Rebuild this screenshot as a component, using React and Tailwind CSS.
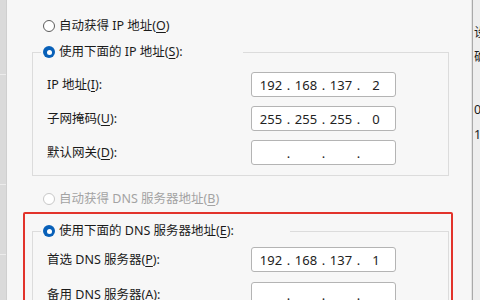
import React from "react";

const font = { fontFamily: '"Noto Sans", "Noto Sans CJK SC", sans-serif' };

const Key = ({ k }) => (
  <>
    (<span className="underline underline-offset-2">{k}</span>)
  </>
);

const Radio = ({ checked, disabled }) => {
  if (checked) {
    return (
      <span className="flex h-[12px] w-[12px] shrink-0 items-center justify-center rounded-full bg-[#0860b8]">
        <span className="h-[5px] w-[5px] rounded-full bg-white" />
      </span>
    );
  }
  return (
    <span
      className={`h-[12px] w-[12px] shrink-0 rounded-full border bg-white ${
        disabled ? "border-[#c8c8c8] bg-[#f6f6f6]" : "border-[#5c5c5c]"
      }`}
    />
  );
};

const IpBox = ({ parts }) => (
  <div className="flex h-[25px] w-[145px] items-center rounded-[3px] border border-[#b4b4b4] bg-white pl-[5px] text-[13px] text-[#222]">
    {parts.map((p, i) => (
      <React.Fragment key={i}>
        <span className="w-[28px] text-center">{p}</span>
        {i < 3 && <span className="w-[7px] text-center">.</span>}
      </React.Fragment>
    ))}
  </div>
);

const Row = ({ label, parts, className = "" }) => (
  <div className={`flex items-center ${className}`}>
    <span className="w-[204px]">{label}</span>
    <IpBox parts={parts} />
  </div>
);

const empty = ["", "", "", ""];

export default function App() {
  return (
    <div
      className="relative flex h-[300px] w-[480px] overflow-hidden bg-[#f6f6f6] text-[12.5px] leading-[18px] text-[#1b1b1b]"
      style={font}
    >
      {/* left window edge */}
      <div className="flex w-[7px] shrink-0 flex-col border-r border-[#cfcfcf] bg-[#dadada]">
        <div className="h-[75px] border-b border-[#ececec]" />
        <div className="h-[110px] border-b border-[#ececec]" />
        <div className="h-[70px] border-b border-[#ececec]" />
      </div>

      {/* dialog */}
      <div className="w-[465px] shrink-0 border-r border-[#e4e4e4] bg-[#f7f7f7] pt-[17px]">
        <div className="flex h-[18px] items-center gap-[4px] pl-[36px]">
          <Radio />
          <span>
            自动获得 IP 地址<Key k="O" />
          </span>
        </div>

        <fieldset className="ml-[25px] mt-[8px] w-[417px] border border-[#dcdcdc] pb-[10px]">
          <legend className="ml-[8px] flex h-[18px] w-[202px] items-center gap-[4px] pl-[2px]">
            <Radio checked />
            <span>
              使用下面的 IP 地址<Key k="S" />:
            </span>
          </legend>
          <div className="flex flex-col gap-[9px] pl-[14px] pt-[11px]">
            <Row label={<>IP 地址<Key k="I" />:</>} parts={["192", "168", "137", "2"]} />
            <Row label={<>子网掩码<Key k="U" />:</>} parts={["255", "255", "255", "0"]} />
            <Row label={<>默认网关<Key k="D" />:</>} parts={empty} />
          </div>
        </fieldset>

        <div className="mt-[14px] flex h-[18px] items-center gap-[4px] pl-[36px] text-[#a3a3a3]">
          <Radio disabled />
          <span>
            自动获得 DNS 服务器地址<Key k="B" />
          </span>
        </div>

        <fieldset className="ml-[25px] mt-[14px] w-[417px] border border-[#dcdcdc] pb-[10px]">
          <legend className="ml-[8px] flex h-[18px] w-[249px] items-center gap-[4px] pl-[2px]">
            <Radio checked />
            <span>
              使用下面的 DNS 服务器地址<Key k="E" />:
            </span>
          </legend>
          <div className="flex flex-col gap-[10px] pl-[14px] pt-[7px]">
            <Row label={<>首选 DNS 服务器<Key k="P" />:</>} parts={["192", "168", "137", "1"]} />
            <Row label={<>备用 DNS 服务器<Key k="A" />:</>} parts={empty} />
          </div>
        </fieldset>
      </div>

      {/* window behind, on the right */}
      <div className="flex w-[8px] shrink-0 flex-col overflow-hidden border-l border-[#a9a9a9] bg-[#eeeeee] pl-[1px] text-[12.5px]">
        <span className="mt-[24px] whitespace-nowrap">设置</span>
        <span className="mt-[6px] whitespace-nowrap">确定</span>
        <span className="mt-[35px] whitespace-nowrap">0.0</span>
        <span className="mt-[7px] whitespace-nowrap">1.1</span>
      </div>

      {/* red highlight annotation */}
      <div className="pointer-events-none absolute left-[23px] top-[212px] h-[120px] w-[430px] rounded-[2px] border-2 border-[#e2332b]" />
    </div>
  );
}
